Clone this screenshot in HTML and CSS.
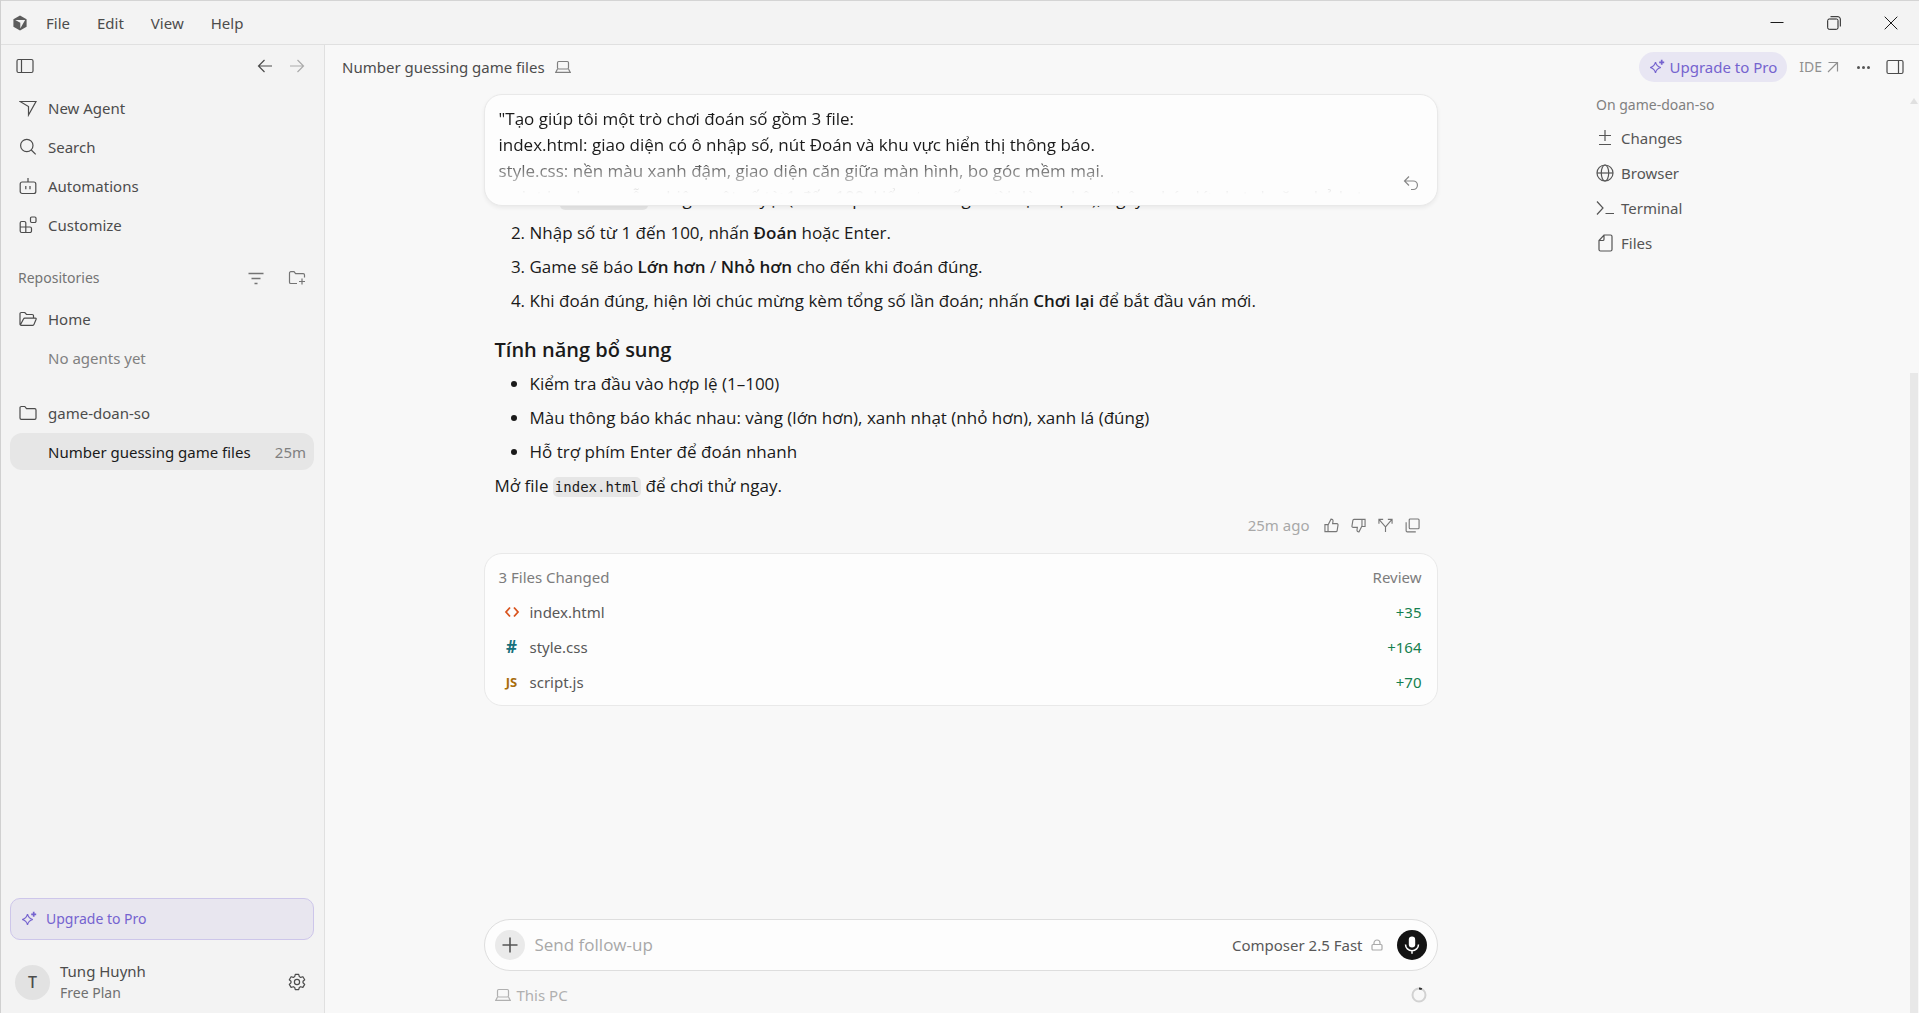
FILE: index.html
```html
<!DOCTYPE html>
<html lang="vi">
<head>
<meta charset="UTF-8">
<meta name="viewport" content="width=device-width, initial-scale=1.0">
<title>Number guessing game files</title>
<link rel="stylesheet" href="styles.css">
</head>
<body>

<!-- Icons -->
<svg class="sprite" aria-hidden="true">
  <symbol id="i-logo" viewBox="0 0 16 16"><path d="M8 .6 14.6 4.3v7.4L8 15.4 1.4 11.7V4.3z" fill="#5c5c5c"/><path d="M3.2 5h9.9L8.3 13.4V7.8z" fill="#f3f3f3"/></symbol>
  <symbol id="i-panel" viewBox="0 0 18 16"><rect x="1" y="1.5" width="16" height="13" rx="1.5"/><path d="M5.5 1.5v13"/></symbol>
  <symbol id="i-panel-right" viewBox="0 0 18 16"><rect x="1" y="1.5" width="16" height="13" rx="1.5"/><path d="M12.5 1.5v13"/></symbol>
  <symbol id="i-back" viewBox="0 0 16 16"><path d="M15 8H1.5M7.5 2l-6 6 6 6"/></symbol>
  <symbol id="i-forward" viewBox="0 0 16 16"><path d="M1 8h13.5M8.5 2l6 6-6 6"/></symbol>
  <symbol id="i-agent" viewBox="0 0 18 18"><path d="M1 2.5h16L9.5 16V7.5z"/></symbol>
  <symbol id="i-search" viewBox="0 0 18 18"><circle cx="7.8" cy="7.5" r="6.2"/><path d="m12.3 12 4.4 4.4"/></symbol>
  <symbol id="i-bot" viewBox="0 0 18 18"><rect x="1.2" y="5" width="15.6" height="11.5" rx="2"/><path d="M9 5V1M6.8 9v3.2M11 9v3.2"/></symbol>
  <symbol id="i-blocks" viewBox="0 0 18 18"><path d="M6.8 11V7A1.500 1.500 0 0 0 5.300 5.500H2.700A1.500 1.500 0 0 0 1.200 7v8a1.500 1.500 0 0 0 1.500 1.500H11a1.500 1.500 0 0 0 1.500-1.500v-2.500A1.500 1.500 0 0 0 11 11H1.200M6.800 11v5.500"/><rect x="11.500" y="1" width="5.500" height="5.500" rx="1.200"/></symbol>
  <symbol id="i-filter" viewBox="0 0 16 16"><path d="M.5 3.5h15M3.5 8.5h9M6.5 13.5h3" stroke-width="1.6"/></symbol>
  <symbol id="i-folder-add" viewBox="0 0 18 16"><path d="M9 13.5H2.8a1.3 1.3 0 0 1-1.3-1.3V3a1.3 1.3 0 0 1 1.3-1.3H6l1.6 2h7.6A1.3 1.3 0 0 1 16.5 5v2.5M14 8.5v6M11 11.5h6"/></symbol>
  <symbol id="i-folder" viewBox="0 0 18 16"><path d="M1 13V2.8A1.3 1.3 0 0 1 2.3 1.5h3.5l1.7 2.2h8.2A1.3 1.3 0 0 1 17 5v8a1.3 1.3 0 0 1-1.3 1.3H2.3A1.3 1.3 0 0 1 1 13z"/></symbol>
  <symbol id="i-folder-open" viewBox="0 0 18 16"><path d="M1 13V2.8A1.3 1.3 0 0 1 2.3 1.5h3.5l1.7 2h5.7A1.3 1.3 0 0 1 14.5 4.8V7M1.3 14 4.5 8a1.5 1.5 0 0 1 1.3-.9h10.5c.7 0 1 .5.8 1.1L15 13.4a1.3 1.3 0 0 1-1.2.9H2.2A1.2 1.2 0 0 1 1 13"/></symbol>
  <symbol id="i-spark" viewBox="0 0 16 16"><path d="M6.5 3.2c.7 3 2.3 4.6 5.3 5.3-3 .7-4.6 2.3-5.3 5.3-.7-3-2.3-4.6-5.3-5.3 3-.7 4.6-2.3 5.3-5.3z"/><path d="M12.7.8v5M10.2 3.3h5" stroke-width="1.7"/></symbol>
  <symbol id="i-gear" viewBox="0 0 18 18"><path d="M7.3 1.3h3.4l.6 2.3 1.3.8 2.3-.7 1.8 3-1.7 1.6v1.5l1.7 1.6-1.8 3-2.3-.7-1.3.8-.6 2.200H7.3l-.6-2.200-1.300-.8-2.300.7-1.800-3L3 9.800V8.300L1.300 6.700l1.800-3 2.300.7 1.300-.8z" stroke-linejoin="round"/><circle cx="9" cy="9" r="2.600"/></symbol>
  <symbol id="i-laptop" viewBox="0 0 16 14"><rect x="2.5" y="1.5" width="11" height="7.5" rx="1.2"/><path d="M2.5 9 .8 12.3h14.4L13.5 9"/></symbol>
  <symbol id="i-undo" viewBox="0 0 16 16"><path d="M6 1.5 1.5 6 6 10.5M1.500 6h8.700a4.200 4.200 0 0 1 0 8.500H8"/></symbol>
  <symbol id="i-up" viewBox="0 0 16 16"><path d="M1 7h3.300v7.500H1zM4.300 7.500 7.500 1.200c1.500 0 2.300 1 2.100 2.300L9.200 6h4.600c.8 0 1.300.7 1.200 1.400l-1 6c-.1.700-.6 1.100-1.200 1.100H4.300"/></symbol>
  <symbol id="i-fork" viewBox="0 0 16 16"><path d="M8 15V9.500L1.500 2M8 9.500 14.500 2M1 6V1.500h4.500M10.500 1.500H15V6"/></symbol>
  <symbol id="i-copy" viewBox="0 0 16 16"><rect x="4.5" y="1" width="10.5" height="10.5" rx="1"/><path d="M1.200 4.500V13.500c0 .8.500 1.300 1.300 1.300h9"/></symbol>
  <symbol id="i-html" viewBox="0 0 16 12"><path d="M6 1.500 2 6l4 4.500M10 1.500 14 6l-4 4.500"/></symbol>
  <symbol id="i-out" viewBox="0 0 12 12"><path d="M1.500 1.500h9v9M10.500 1.500l-9.500 9.500"/></symbol>
  <symbol id="i-changes" viewBox="0 0 18 18"><path d="M9 1v11M3 6.500h12M3 15.500h12"/></symbol>
  <symbol id="i-globe" viewBox="0 0 18 18"><circle cx="9" cy="9" r="8"/><ellipse cx="9" cy="9" rx="3.700" ry="8"/><path d="M1 9h16"/></symbol>
  <symbol id="i-term" viewBox="0 0 18 18"><path d="m1 2.500 6 6.500-6 6.500M9.500 14.500H18"/></symbol>
  <symbol id="i-file" viewBox="0 0 18 18"><path d="M8 1h6.500A1.500 1.500 0 0 1 16 2.500v13a1.500 1.500 0 0 1-1.500 1.500h-10A1.500 1.500 0 0 1 3 15.500V6.500zM8 1v4.200A1.300 1.300 0 0 1 6.700 6.500H3"/></symbol>
  <symbol id="i-plus" viewBox="0 0 16 16"><path d="M8 .5v15M.5 8h15" stroke-width="1.6"/></symbol>
  <symbol id="i-lock" viewBox="0 0 12 12"><rect x="1" y="5.500" width="10" height="5.500" rx="1"/><path d="M3 5.500V4a3 3 0 0 1 6 0v1.500"/></symbol>
  <symbol id="i-mic" viewBox="0 0 16 20"><rect x="4.800" y="1.500" width="6.400" height="11" rx="3.200" fill="#fff" stroke="none"/><path d="M1.500 9.500a6.500 6.200 0 0 0 13 0M8 15.700v3"/></symbol>
  <symbol id="i-min" viewBox="0 0 14 14"><path d="M.5 6.500h13"/></symbol>
  <symbol id="i-restore" viewBox="0 0 14 14"><rect x=".7" y="3" width="10.300" height="10.300" rx="1.500"/><path d="M3.500.7H11A2.300 2.300 0 0 1 13.300 3v7.500"/></symbol>
  <symbol id="i-close" viewBox="0 0 14 14"><path d="m.7.700 12.600 12.600M13.300.700.700 13.300"/></symbol>
</svg>

<header class="titlebar">
  <svg class="icon logo"><use href="#i-logo"/></svg>
  <nav class="menu">
    <button>File</button>
    <button>Edit</button>
    <button>View</button>
    <button>Help</button>
  </nav>
  <div class="window-buttons">
    <button aria-label="Minimize"><svg class="icon"><use href="#i-min"/></svg></button>
    <button aria-label="Restore"><svg class="icon"><use href="#i-restore"/></svg></button>
    <button aria-label="Close"><svg class="icon"><use href="#i-close"/></svg></button>
  </div>
</header>

<div class="app">
  <aside class="sidebar">
    <div class="sidebar-top">
      <button aria-label="Toggle sidebar"><svg class="icon wide"><use href="#i-panel"/></svg></button>
      <div class="history">
        <button aria-label="Back"><svg class="icon"><use href="#i-back"/></svg></button>
        <button aria-label="Forward" disabled><svg class="icon"><use href="#i-forward"/></svg></button>
      </div>
    </div>

    <nav class="rows">
      <button class="row"><svg class="icon wide"><use href="#i-agent"/></svg>New Agent</button>
      <button class="row"><svg class="icon wide"><use href="#i-search"/></svg>Search</button>
      <button class="row"><svg class="icon wide"><use href="#i-bot"/></svg>Automations</button>
      <button class="row"><svg class="icon wide"><use href="#i-blocks"/></svg>Customize</button>
    </nav>

    <div class="repo-head">
      <span>Repositories</span>
      <button aria-label="Filter"><svg class="icon"><use href="#i-filter"/></svg></button>
      <button aria-label="Add repository"><svg class="icon wide"><use href="#i-folder-add"/></svg></button>
    </div>
    <div class="rows">
      <button class="row"><svg class="icon wide"><use href="#i-folder-open"/></svg>Home</button>
      <p class="row empty">No agents yet</p>
    </div>
    <div class="rows repo">
      <button class="row"><svg class="icon wide"><use href="#i-folder"/></svg>game-doan-so</button>
      <a class="row active" href="#chat"><span>Number guessing game files</span><time>25m</time></a>
    </div>

    <div class="sidebar-bottom">
      <button class="upgrade-box"><svg class="icon"><use href="#i-spark"/></svg>Upgrade to Pro</button>
      <div class="account">
        <span class="avatar">T</span>
        <div class="who">
          <p>Tung Huynh</p>
          <p class="plan">Free Plan</p>
        </div>
        <button aria-label="Settings"><svg class="icon wide"><use href="#i-gear"/></svg></button>
      </div>
    </div>
  </aside>

  <main class="main">
    <div class="topbar">
      <h1>Number guessing game files</h1>
      <svg class="icon"><use href="#i-laptop"/></svg>
      <div class="actions">
        <button class="upgrade-pill"><svg class="icon"><use href="#i-spark"/></svg>Upgrade to Pro</button>
        <a class="ide" href="#ide">IDE <svg class="icon small"><use href="#i-out"/></svg></a>
        <button class="dots" aria-label="More"><i></i><i></i><i></i></button>
        <button aria-label="Toggle right panel"><svg class="icon wide"><use href="#i-panel-right"/></svg></button>
      </div>
    </div>

    <div class="content">
      <section class="chat" id="chat">
        <div class="column">
          <div class="prompt card">
            <p class="prompt-text">"Tạo giúp tôi một trò chơi đoán số gồm 3 file:<br>
              index.html: giao diện có ô nhập số, nút Đoán và khu vực hiển thị thông báo.<br>
              style.css: nền màu xanh đậm, giao diện căn giữa màn hình, bo góc mềm mại.<br>
              script.js: chọn ngẫu nhiên một số từ 1 đến 100, kiểm tra số người dùng nhập, thông báo lớn hơn hoặc nhỏ hơn.</p>
            <button class="revert" aria-label="Revert"><svg class="icon"><use href="#i-undo"/></svg></button>
          </div>

          <article class="answer">
            <ol>
              <li>Mở <code>index.html</code> bằng trình duyệt (click đúp vào file trong thư mục dự án), ngay.</li>
              <li>Nhập số từ 1 đến 100, nhấn <strong>Đoán</strong> hoặc Enter.</li>
              <li>Game sẽ báo <strong>Lớn hơn</strong> / <strong>Nhỏ hơn</strong> cho đến khi đoán đúng.</li>
              <li>Khi đoán đúng, hiện lời chúc mừng kèm tổng số lần đoán; nhấn <strong>Chơi lại</strong> để bắt đầu ván mới.</li>
            </ol>
            <h2>Tính năng bổ sung</h2>
            <ul>
              <li>Kiểm tra đầu vào hợp lệ (1–100)</li>
              <li>Màu thông báo khác nhau: vàng (lớn hơn), xanh nhạt (nhỏ hơn), xanh lá (đúng)</li>
              <li>Hỗ trợ phím Enter để đoán nhanh</li>
            </ul>
            <p>Mở file <code>index.html</code> để chơi thử ngay.</p>
          </article>

          <div class="feedback">
            <time>25m ago</time>
            <button aria-label="Good"><svg class="icon"><use href="#i-up"/></svg></button>
            <button aria-label="Bad"><svg class="icon flip"><use href="#i-up"/></svg></button>
            <button aria-label="Fork"><svg class="icon"><use href="#i-fork"/></svg></button>
            <button aria-label="Copy"><svg class="icon"><use href="#i-copy"/></svg></button>
          </div>

          <div class="files card">
            <div class="file-row head"><span>3 Files Changed</span><button>Review</button></div>
            <div class="file-row"><svg class="icon html"><use href="#i-html"/></svg><span>index.html</span><b>+35</b></div>
            <div class="file-row"><span class="kind css">#</span><span>style.css</span><b>+164</b></div>
            <div class="file-row"><span class="kind js">JS</span><span>script.js</span><b>+70</b></div>
          </div>
        </div>

        <div class="column bottom">
          <form class="composer">
            <button type="button" class="round add" aria-label="Add"><svg class="icon"><use href="#i-plus"/></svg></button>
            <input type="text" placeholder="Send follow-up" aria-label="Send follow-up">
            <button type="button" class="model">Composer 2.5 Fast <svg class="icon small"><use href="#i-lock"/></svg></button>
            <button type="button" class="round mic" aria-label="Voice input"><svg class="icon"><use href="#i-mic"/></svg></button>
          </form>
          <div class="status">
            <svg class="icon"><use href="#i-laptop"/></svg>
            <span>This PC</span>
            <svg class="ring" viewBox="0 0 16 16"><circle cx="8" cy="8" r="6.500"/><path d="M8 1.500a6.500 6.500 0 0 1 2.800.6"/></svg>
          </div>
        </div>
      </section>

      <aside class="tools">
        <h2>On game-doan-so</h2>
        <button><svg class="icon wide"><use href="#i-changes"/></svg>Changes</button>
        <button><svg class="icon wide"><use href="#i-globe"/></svg>Browser</button>
        <button><svg class="icon wide"><use href="#i-term"/></svg>Terminal</button>
        <button><svg class="icon wide"><use href="#i-file"/></svg>Files</button>
      </aside>

      <div class="scrollbar"><span class="arrow"></span><span class="thumb"></span></div>
    </div>
  </main>
</div>

</body>
</html>
```
FILE: styles.css
```css
* {
  box-sizing: border-box;
}

body {
  margin: 0;
  height: 100vh;
  display: flex;
  flex-direction: column;
  overflow: hidden;
  border-left: 1px solid #d0d0d0;
  background: #f3f3f3;
  color: #4c4c4c;
  font: 15px/20px "Segoe UI", "Noto Sans", sans-serif;
}

h1, h2, p, ol, ul {
  margin: 0;
  padding: 0;
  font-weight: normal;
}

button {
  display: flex;
  align-items: center;
  padding: 0;
  border: none;
  background: none;
  color: inherit;
  font: inherit;
  cursor: pointer;
}

a {
  color: inherit;
  text-decoration: none;
}

.sprite {
  position: absolute;
  width: 0;
  height: 0;
}

.icon {
  flex: none;
  width: 16px;
  height: 16px;
  fill: none;
  stroke: currentColor;
  stroke-width: 1.2;
}

.icon.wide {
  width: 18px;
  height: 18px;
}

.icon.small {
  width: 12px;
  height: 12px;
}

.icon.flip {
  transform: rotate(180deg);
}

/* Title bar */
.titlebar {
  display: flex;
  align-items: center;
  height: 45px;
  flex: none;
  padding-left: 11px;
  border-top: 1px solid #d4d4d4;
  border-bottom: 1px solid #e0e0e0;
}

.logo {
  stroke: none;
}

.menu {
  display: flex;
  gap: 27px;
  margin-left: 18px;
}

.window-buttons {
  display: flex;
  margin-left: auto;
  color: #1a1a1a;
}

.window-buttons button {
  width: 57px;
  justify-content: center;
}

.window-buttons .icon {
  width: 14px;
  height: 14px;
  stroke-width: 1;
}

.app {
  display: flex;
  flex: 1;
  min-height: 0;
}

/* Sidebar */
.sidebar {
  display: flex;
  flex-direction: column;
  width: 324px;
  flex: none;
  padding: 0 10px 0 9px;
  border-right: 1px solid #e0e0e0;
}

.sidebar-top {
  display: flex;
  justify-content: space-between;
  height: 42px;
  padding: 0 9px 0 6px;
}

.history {
  display: flex;
  gap: 16px;
}

button:disabled {
  color: #ababab;
}

.rows {
  display: flex;
  flex-direction: column;
  gap: 2px;
  margin-top: 2px;
}

.row {
  display: flex;
  align-items: center;
  gap: 11px;
  height: 37px;
  padding: 0 8px 0 9px;
  border-radius: 12px;
  text-align: left;
}

.row.empty {
  padding-left: 38px;
  color: #808080;
}

.row.active {
  justify-content: space-between;
  padding-left: 38px;
  background: #e6e6e6;
  color: #1a1a1a;
}

.row.active time {
  color: #808080;
}

.repo-head {
  display: flex;
  align-items: center;
  gap: 24px;
  height: 30px;
  margin-top: 20px;
  padding: 0 8px;
  color: #747474;
  font-size: 14px;
}

.repo-head span {
  flex: 1;
}

.repo-head + .rows {
  margin-top: 7px;
}

.repo {
  margin-top: 18px;
}

.sidebar-bottom {
  margin-top: auto;
}

.upgrade-box {
  width: 100%;
  height: 42px;
  gap: 9px;
  padding: 0 10px;
  border: 1px solid #cdc6ea;
  border-radius: 10px;
  background: #e8e6ef;
  color: #7563cf;
  font-size: 14px;
}

.account {
  display: flex;
  align-items: center;
  gap: 10px;
  padding: 20px 8px 9px 5px;
}

.avatar {
  width: 35px;
  height: 35px;
  border-radius: 50%;
  background: #e2e2e2;
  font-size: 16px;
  font-weight: 500;
  line-height: 35px;
  text-align: center;
}

.who {
  flex: 1;
  line-height: 22px;
}

.plan {
  color: #707070;
  font-size: 14px;
}

/* Main */
.main {
  display: flex;
  flex: 1;
  flex-direction: column;
  min-width: 0;
  background: #f8f8f8;
}

.topbar {
  display: flex;
  align-items: center;
  height: 44px;
  gap: 10px;
  padding: 0 15px 0 17px;
}

.topbar h1 {
  font-size: 15px;
}

.topbar > .icon {
  color: #808080;
}

.actions {
  display: flex;
  align-items: center;
  gap: 12px;
  margin-left: auto;
}

.upgrade-pill {
  height: 30px;
  gap: 5px;
  padding: 0 10px;
  border-radius: 15px;
  background: #e8e6f3;
  color: #7563cf;
}

.ide {
  display: flex;
  align-items: center;
  gap: 5px;
  color: #909090;
  font-size: 14px;
}

.dots {
  gap: 2px;
  padding: 0 4px 0 6px;
}

.dots i {
  width: 3px;
  height: 3px;
  border-radius: 50%;
  background: #555;
}

.content {
  display: flex;
  flex: 1;
  min-height: 0;
}

.chat {
  display: flex;
  flex: 1;
  flex-direction: column;
  padding: 5px 24px 0;
  color: #1a1a1a;
}

.column {
  width: 100%;
  max-width: 954px;
  margin: 0 auto;
}

.card {
  border: 1px solid #e9e9e9;
  border-radius: 18px;
  background: #fdfdfd;
}

.prompt {
  position: relative;
  padding: 11px 14px;
  box-shadow: 0 2px 4px rgba(0, 0, 0, 0.06);
}

.prompt-text {
  height: 88px;
  overflow: hidden;
  font: 17px/26px "Segoe UI", "Open Sans", sans-serif;
  mask-image: linear-gradient(#000 55%, transparent 100%);
}

.revert {
  position: absolute;
  right: 18px;
  bottom: 14px;
  color: #888;
}

.answer {
  margin-top: -20px;
  padding: 0 11px;
  font: 17px/26px "Segoe UI", "Open Sans", sans-serif;
}

.answer ol,
.answer ul {
  padding-left: 35px;
}

.answer li {
  margin-bottom: 8px;
}

.answer h2 {
  margin: 23px 0 8px;
  font-size: 20px;
  font-weight: 600;
}

.answer strong {
  font-weight: 600;
}

code {
  padding: 2px;
  border-radius: 5px;
  background: #e6e6e6;
  font: 14px "DejaVu Sans Mono", monospace;
}

.feedback {
  display: flex;
  align-items: center;
  justify-content: flex-end;
  gap: 12px;
  margin: 16px 18px 18px;
  color: #777;
}

.feedback time {
  margin-right: 2px;
  color: #a8a8a8;
}

.feedback .icon {
  width: 15px;
  height: 15px;
}

.files {
  padding: 5px 15px 6px 14px;
  color: #585858;
}

.file-row {
  display: flex;
  align-items: center;
  gap: 10px;
  height: 35px;
  padding-left: 5px;
}

.file-row.head {
  justify-content: space-between;
  padding-left: 0;
  color: #7c7c7c;
}

.file-row b {
  margin-left: auto;
  color: #15804e;
  font-weight: normal;
}

.kind {
  width: 16px;
  font-weight: 700;
  text-align: center;
}

.icon.html {
  height: 12px;
  color: #d9541e;
  stroke-width: 1.8;
}

.css {
  color: #17707c;
  font-size: 17px;
}

.js {
  color: #a86c0c;
  font-size: 13px;
}

/* Composer */
.bottom {
  margin-top: auto;
}

.composer {
  display: flex;
  align-items: center;
  height: 52px;
  gap: 10px;
  padding: 0 10px;
  border: 1px solid #dedede;
  border-radius: 26px;
  background: #fdfdfd;
}

.composer input {
  flex: 1;
  min-width: 0;
  padding: 0;
  border: none;
  outline: none;
  background: none;
  font: 17px/26px "Segoe UI", "Open Sans", sans-serif;
}

.composer input::placeholder {
  color: #a8a8a8;
}

.round {
  width: 30px;
  height: 30px;
  justify-content: center;
  border-radius: 50%;
}

.add {
  background: #eaeaea;
  color: #555;
}

.mic {
  background: #141414;
  color: #fff;
}

.mic .icon {
  height: 20px;
  stroke-width: 1.5;
}

.model {
  gap: 8px;
  margin-right: 4px;
  color: #585858;
}

.model .icon {
  color: #aaa;
}

.status {
  display: flex;
  align-items: center;
  gap: 6px;
  height: 42px;
  padding: 6px 11px 0;
  color: #b0b0b0;
}

.ring {
  width: 16px;
  margin-left: auto;
  fill: none;
  stroke: #d2d2d2;
  stroke-width: 2;
}

.ring path {
  stroke: #333;
}

/* Right panel */
.tools {
  display: flex;
  flex-direction: column;
  width: 313px;
  padding-top: 2px;
  color: #555;
}

.tools h2 {
  height: 29px;
  padding-top: 4px;
  color: #808080;
  font-size: 14px;
}

.tools button {
  height: 35px;
  gap: 7px;
}

.scrollbar {
  display: flex;
  flex-direction: column;
  justify-content: space-between;
  align-items: center;
  width: 10px;
  padding-top: 9px;
}

.arrow {
  border: 4px solid transparent;
  border-top: 0;
  border-bottom: 6px solid #e0e0e0;
}

.thumb {
  width: 8px;
  height: 70%;
  background: #e8e8e8;
}
```
